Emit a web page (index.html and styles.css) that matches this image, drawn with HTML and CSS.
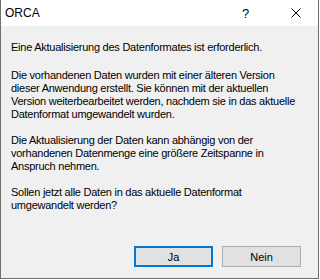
FILE: index.html
```html
<!DOCTYPE html>
<html lang="de">
<head>
  <meta charset="UTF-8" />
  <title>ORCA</title>
  <link rel="stylesheet" href="styles.css">
</head>
<body>
  <div class="window">
    <div class="titlebar">
      <span class="title">ORCA</span>
      <span class="help">?</span>
      <span class="close">
        <svg width="10" height="10" viewBox="0 0 10 10">
          <path d="M0.5 0.5 L9.5 9.5 M9.5 0.5 L0.5 9.5" stroke="#000" stroke-width="1" fill="none" />
        </svg>
      </span>
    </div>
    <div class="content">
      <div class="message">
        <p>Eine Aktualisierung des Datenformates ist erforderlich.</p>
        <p>Die vorhandenen Daten wurden mit einer älteren Version<br>dieser Anwendung erstellt. Sie können mit der aktuellen<br>Version weiterbearbeitet werden, nachdem sie in das aktuelle<br>Datenformat umgewandelt wurden.</p>
        <p>Die Aktualisierung der Daten kann abhängig von der<br>vorhandenen Datenmenge eine größere Zeitspanne in<br>Anspruch nehmen.</p>
        <p>Sollen jetzt alle Daten in das aktuelle Datenformat<br>umgewandelt werden?</p>
      </div>
      <div class="buttons">
        <button class="btn default">Ja</button>
        <button class="btn">Nein</button>
      </div>
    </div>
  </div>
</body>
</html>
```

FILE: styles.css
```css
body {
  margin: 0;
  background: #ffffff;
}

.window {
  width: 319px;
  height: 279px;
  box-sizing: border-box;
  border: 1px solid #707070;
  border-top: none;
  display: flex;
  flex-direction: column;
  font-family: "Liberation Sans", Arial, sans-serif;
  color: #000;
}

.titlebar {
  height: 26px;
  background: #ffffff;
  display: flex;
  align-items: center;
  flex-shrink: 0;
}

.title {
  font-size: 12px;
  margin-left: 4px;
  flex: 1;
}

.help {
  font-size: 13px;
  width: 10px;
  margin-right: 39px;
}

.close {
  width: 10px;
  height: 10px;
  margin-right: 17px;
  margin-bottom: 1px;
  display: flex;
}

.content {
  flex: 1;
  background: #f0f0f0;
  display: flex;
  flex-direction: column;
  padding: 15px 17px 11px 10px;
}

.message {
  font-size: 11px;
  line-height: 13px;
  letter-spacing: -0.25px;
  white-space: nowrap;
}

.message p {
  margin: 0 0 13px;
}

.message p:first-child {
  margin-bottom: 15px;
}

.buttons {
  margin-top: auto;
  display: flex;
  justify-content: flex-end;
  gap: 9px;
}

.btn {
  width: 79px;
  height: 21px;
  box-sizing: border-box;
  background: #e1e1e1;
  border: 1px solid #adadad;
  font-family: "Liberation Sans", Arial, sans-serif;
  font-size: 11px;
  color: #000;
  padding: 0;
}

.btn.default {
  border: 2px solid #0078d7;
}
```
